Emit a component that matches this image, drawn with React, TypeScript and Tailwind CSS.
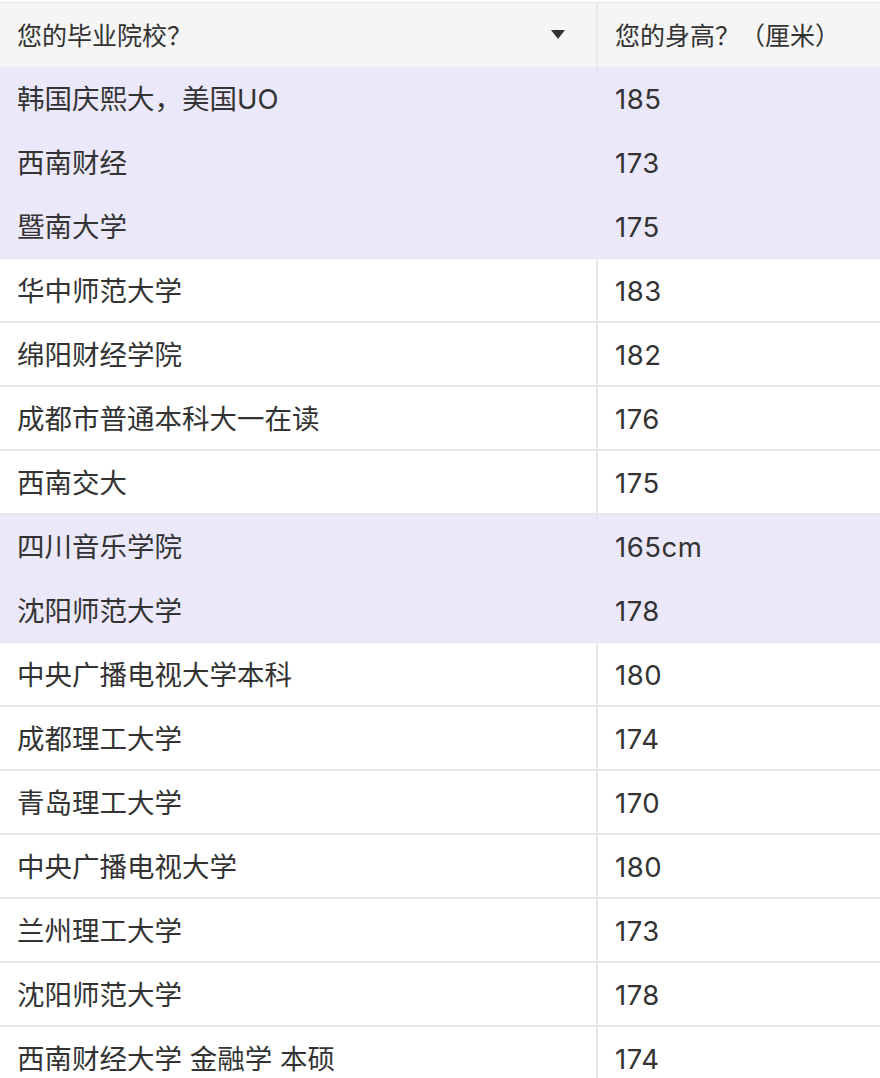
import React from "react";

type Row = { school: string; height: string; hl?: boolean };

const rows: Row[] = [
  { school: "韩国庆熙大，美国UO", height: "185", hl: true },
  { school: "西南财经", height: "173", hl: true },
  { school: "暨南大学", height: "175", hl: true },
  { school: "华中师范大学", height: "183" },
  { school: "绵阳财经学院", height: "182" },
  { school: "成都市普通本科大一在读", height: "176" },
  { school: "西南交大", height: "175" },
  { school: "四川音乐学院", height: "165cm", hl: true },
  { school: "沈阳师范大学", height: "178", hl: true },
  { school: "中央广播电视大学本科", height: "180" },
  { school: "成都理工大学", height: "174" },
  { school: "青岛理工大学", height: "170" },
  { school: "中央广播电视大学", height: "180" },
  { school: "兰州理工大学", height: "173" },
  { school: "沈阳师范大学", height: "178" },
  { school: "西南财经大学 金融学 本硕", height: "174" },
];

const font = {
  fontFamily: '"Inter", "Noto Sans CJK SC", sans-serif',
};

export default function App() {
  return (
    <div className="w-[880px] h-[1078px] overflow-hidden bg-white text-[#333333]" style={font}>
      <div className="h-[2px] bg-white" />
      {/* header */}
      <div className="flex h-[65px] bg-[#f5f5f5] border-t border-[#e6e6e6]">
        <div className="w-[598px] flex items-center justify-between pl-[17px] pr-[31px] pt-[3px] text-[25px] border-r-2 border-[#e8e8e8]">
          <span>您的毕业院校？</span>
          <svg width="14" height="10" viewBox="0 0 14 10" className="-mt-[3px]">
            <path d="M0 0 H14 L7 9 Z" fill="#333333" />
          </svg>
        </div>
        <div className="flex-1 flex items-center pl-[17px] pt-[3px] text-[25px]">
          <span>您的身高？（厘米）</span>
        </div>
      </div>
      {rows.map((r, i) => (
        <div
          key={i}
          className={
            r.hl
              ? "flex h-[64px] bg-[#ebe8fa] border-b border-[#e8e5f8]"
              : "flex h-[64px] bg-white border-b-2 border-[#e8e8e8]"
          }
        >
          <div
            className={
              r.hl
                ? "w-[598px] flex items-center pl-[17px] pt-[3px] text-[27.5px] border-r-2 border-[#e8e5f8]"
                : "w-[598px] flex items-center pl-[17px] pt-[3px] text-[27.5px] border-r-2 border-[#e8e8e8]"
            }
          >
            {r.school}
          </div>
          <div className="flex-1 flex items-center pl-[17px] pt-[3px] text-[27.5px] tracking-[0.5px]">{r.height}</div>
        </div>
      ))}
    </div>
  );
}
